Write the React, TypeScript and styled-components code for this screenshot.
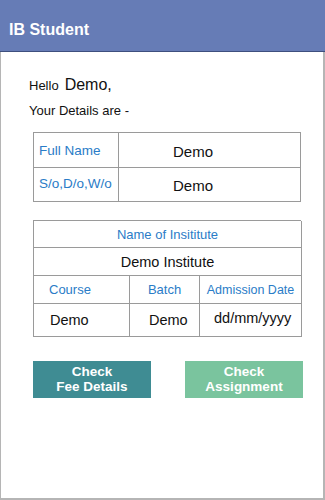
import React from "react";
import styled, { createGlobalStyle } from "styled-components";

const Global = createGlobalStyle`
  html, body { margin: 0; padding: 0; background: #fff; }
  body { font-family: "Liberation Sans", Arial, sans-serif; }
  * { box-sizing: border-box; }
`;

const Frame = styled.div`
  width: 325px;
  height: 500px;
  display: flex;
  flex-direction: column;
  border-left: 1px solid #b5b5b5;
  border-right: 2px solid #b5b5b5;
  border-bottom: 2px solid #b5b5b5;
  background: #fff;
`;

const Header = styled.header`
  height: 52px;
  margin: 0 -2px 0 -1px;
  background: #667cb6;
  border-bottom: 1px solid #3e4f7e;
  display: flex;
  align-items: center;
  padding: 8px 0 0 9px;
  color: #fff;
  font-size: 16px;
  font-weight: bold;
`;

const Body = styled.main`
  padding: 24px 22px 0 32px;
  display: flex;
  flex-direction: column;
`;

const Hello = styled.div`
  display: flex;
  align-items: baseline;
  gap: 6px;
  font-size: 13px;
  color: #111;
  margin-left: -4px;
`;

const Big = styled.span`
  font-size: 16px;
`;

const Line = styled.div`
  margin: 9px 0 0 -4px;
  font-size: 13px;
  color: #111;
`;

const Table = styled.div<{ $cols: string; $top: number }>`
  margin-top: ${(p) => p.$top}px;
  display: grid;
  grid-template-columns: ${(p) => p.$cols};
  border-top: 1px solid #9a9a9a;
  border-left: 1px solid #9a9a9a;
  width: 268px;
`;

const Cell = styled.div<{
  $h: number;
  $blue?: boolean;
  $span?: number;
  $align?: string;
  $pl?: number;
  $dy?: number;
  $fs?: number;
}>`
  height: ${(p) => p.$h}px;
  grid-column: span ${(p) => p.$span || 1};
  border-right: 1px solid #9a9a9a;
  border-bottom: 1px solid #9a9a9a;
  display: flex;
  align-items: center;
  justify-content: ${(p) => p.$align || "flex-start"};
  padding-left: ${(p) => p.$pl || 0}px;
  padding-top: ${(p) => (p.$dy && p.$dy < 0 ? -p.$dy : 0)}px;
  padding-bottom: ${(p) => (p.$dy && p.$dy > 0 ? p.$dy : 0)}px;
  font-size: ${(p) => p.$fs || 13}px;
  color: ${(p) => (p.$blue ? "#2a7cc7" : "#111")};
  white-space: nowrap;
`;

const Buttons = styled.div`
  margin-top: 24px;
  display: flex;
  justify-content: space-between;
  width: 270px;
`;

const Btn = styled.button<{ $bg: string }>`
  width: 118px;
  height: 37px;
  border: none;
  padding: 0 0 2px;
  background: ${(p) => p.$bg};
  color: #fff;
  font-family: "Liberation Sans", Arial, sans-serif;
  font-weight: bold;
  font-size: 13.5px;
  line-height: 15px;
  text-align: center;
`;

export default function App() {
  return (
    <>
      <Global />
      <Frame>
        <Header>IB Student</Header>
        <Body>
          <Hello>
            Hello <Big>Demo,</Big>
          </Hello>
          <Line>Your Details are -</Line>
          <Table $cols="85px 182px" $top={14}>
            <Cell $h={35} $blue $pl={5} $fs={13.5}>Full Name</Cell>
            <Cell $h={35} $pl={54} $fs={15} $dy={-2}>Demo</Cell>
            <Cell $h={34} $blue $pl={5} $dy={3} $fs={13.5}>S/o,D/o,W/o</Cell>
            <Cell $h={34} $pl={54} $fs={15} $dy={-1}>Demo</Cell>
          </Table>
          <Table $cols="96px 70px 102px" $top={18}>
            <Cell $h={27} $blue $span={3} $align="center">Name of Insititute</Cell>
            <Cell $h={28} $span={3} $align="center" $fs={14.5}>Demo Institute</Cell>
            <Cell $h={28} $blue $pl={15}>Course</Cell>
            <Cell $h={28} $blue $align="center">Batch</Cell>
            <Cell $h={28} $blue $align="center" $fs={12.5}>Admission Date</Cell>
            <Cell $h={33} $pl={16} $fs={14.5}>Demo</Cell>
            <Cell $h={33} $pl={19} $fs={14.5}>Demo</Cell>
            <Cell $h={33} $pl={14} $dy={4} $fs={14.5}>dd/mm/yyyy</Cell>
          </Table>
          <Buttons>
            <Btn $bg="#3f8c93">
              Check
              <br />
              Fee Details
            </Btn>
            <Btn $bg="#7ac49e">
              Check
              <br />
              Assignment
            </Btn>
          </Buttons>
        </Body>
      </Frame>
    </>
  );
}
